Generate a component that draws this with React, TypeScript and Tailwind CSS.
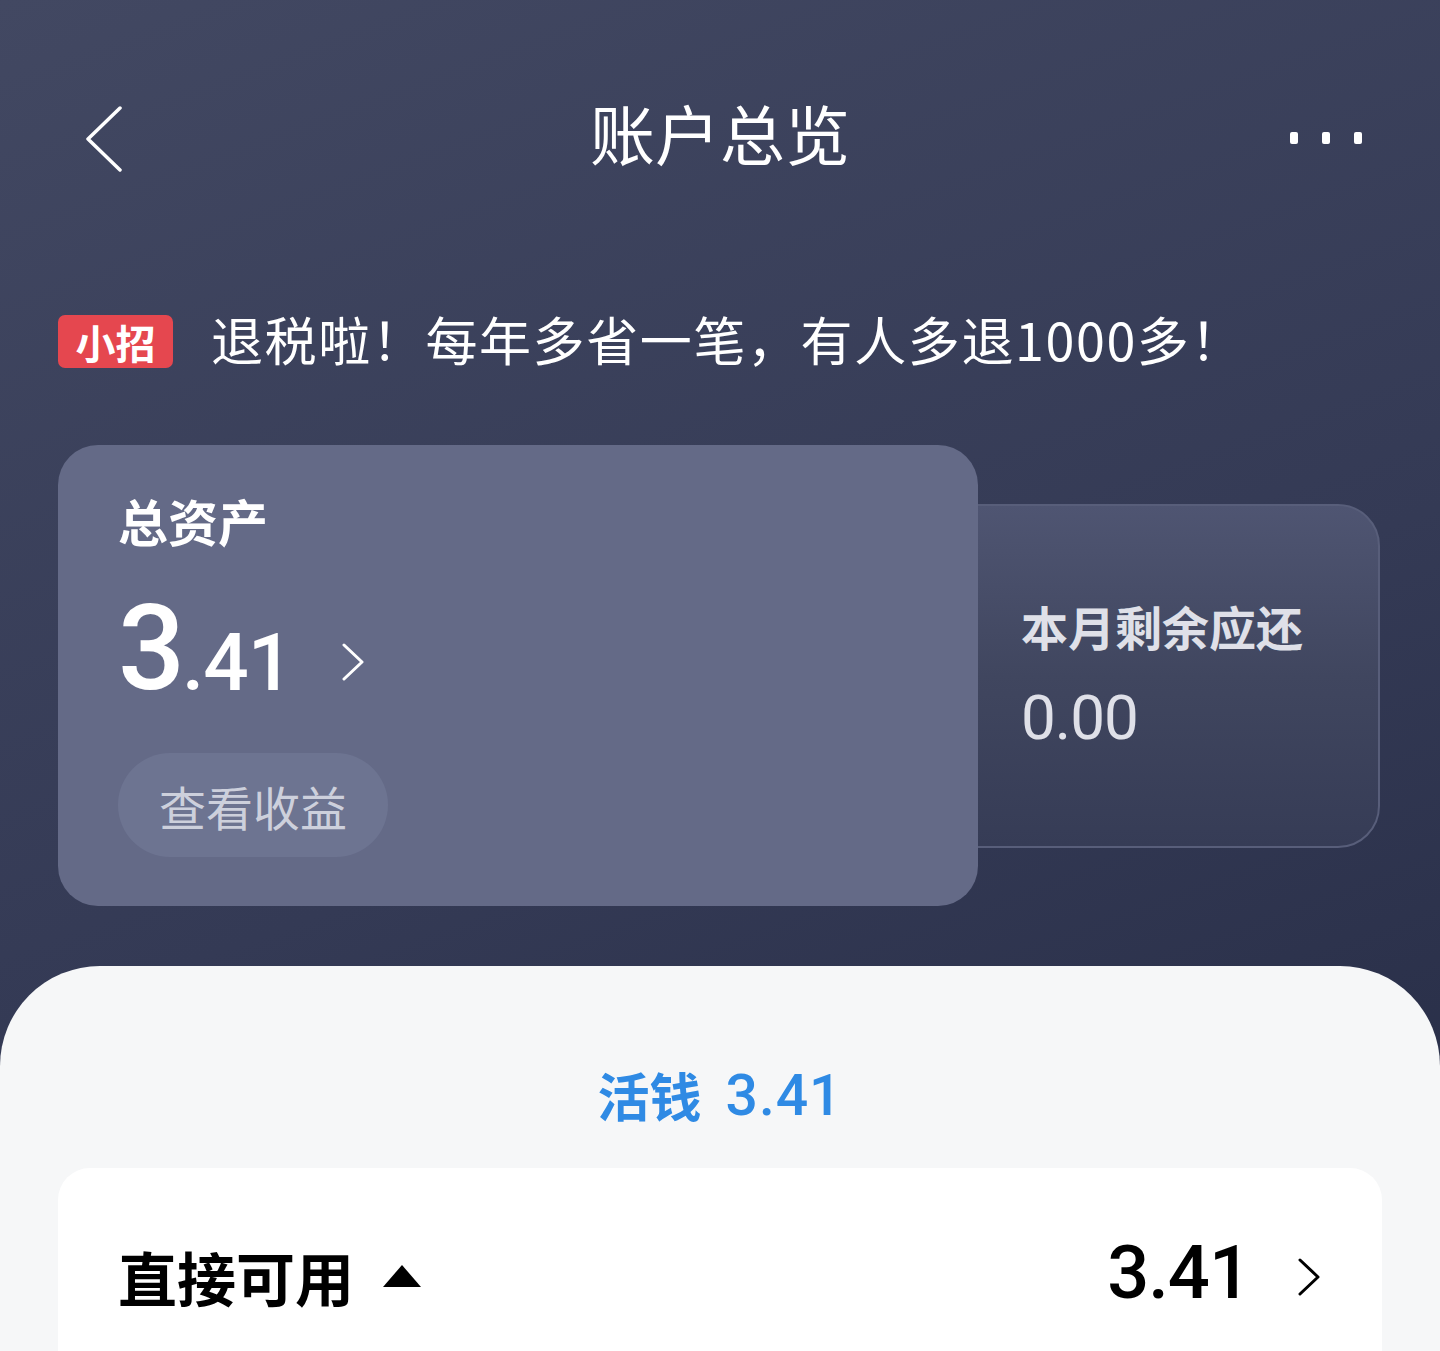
import React from "react";

const cjk = { fontFamily: '"Noto Sans CJK SC", "Noto Sans", sans-serif' };
const num = { fontFamily: 'Roboto, "Noto Sans", sans-serif' };

function Chevron({ className, color = "white", w = 20, h = 36, sw = 3 }: { className?: string; color?: string; w?: number; h?: number; sw?: number }) {
  return (
    <svg className={className} width={w} height={h} viewBox={`0 0 ${w} ${h}`} fill="none">
      <path d={`M2 2 L${w - 2} ${h / 2} L2 ${h - 2}`} stroke={color} strokeWidth={sw} strokeLinecap="round" strokeLinejoin="round" />
    </svg>
  );
}

export default function App() {
  return (
    <div
      className="relative w-[1440px] h-[1351px] overflow-hidden bg-[linear-gradient(160deg,#424862_0%,#343a55_55%,#252b44_100%)]"
      style={cjk}
    >
      {/* Header */}
      <div className="pt-[108px] px-[86px] h-[172px] flex items-center justify-between relative">
        <svg width="36" height="66" viewBox="0 0 36 66" fill="none" className="-mt-[3px]">
          <path d="M34 2 L2 33 L34 64" stroke="white" strokeWidth="3.5" strokeLinecap="round" strokeLinejoin="round" />
        </svg>
        <div className="absolute left-0 right-0 top-[100px] h-[64px] flex items-center justify-center pointer-events-none">
          <span className="text-white text-[65px] leading-none font-normal">账户总览</span>
        </div>
        <div className="flex gap-[24px] items-center mr-[-8px] -mt-[4px]">
          <span className="block w-[8px] h-[12px] rounded-[2px] bg-white" />
          <span className="block w-[8px] h-[12px] rounded-[2px] bg-white" />
          <span className="block w-[8px] h-[12px] rounded-[2px] bg-white" />
        </div>
      </div>

      {/* Banner */}
      <div className="mt-[143px] ml-[58px] flex items-center h-[53px]">
        <div className="h-[53px] w-[115px] rounded-[7px] bg-[#e5474f] flex items-center justify-center">
          <span className="text-white text-[40px] font-bold leading-none">小招</span>
        </div>
        <span className="ml-[38px] -mt-[6px] text-white text-[52px] leading-none tracking-[1.6px]">退税啦！每年多省一笔，有人多退1000多！</span>
      </div>

      {/* Cards */}
      <div className="mt-[77px] ml-[58px] flex items-center">
        <div className="relative z-10 w-[920px] h-[461px] rounded-[40px] bg-[#646a87] pl-[60px] pt-[50px]">
          <div className="text-white text-[50px] font-bold leading-none">总资产</div>
          <div className="mt-[58px] flex items-end text-white h-[92px]" style={num}>
            <span className="text-[118px] leading-[92px] font-medium tracking-[-3px]">3</span>
            <span className="text-[80px] leading-[64px] font-medium tracking-[-1px]">.41</span>
            <Chevron className="ml-[50px] mb-[14px]" w={22} h={38} sw={3} />
          </div>
          <div className="mt-[58px] w-[270px] h-[104px] rounded-full bg-[#6d7491] flex items-center justify-center">
            <span className="text-[47px] leading-none text-[#cdd0dc]">查看收益</span>
          </div>
        </div>
        <div className="relative -ml-[44px] w-[446px] h-[344px] rounded-[42px] border-2 border-[#585e7a] bg-[linear-gradient(180deg,#4f5572_0%,#40465f_50%,#363c56_100%)] pl-[85px] pt-[96px]">
          <div className="text-[#dfe0e8] text-[47px] font-bold leading-none">本月剩余应还</div>
          <div className="mt-[38px] text-[#dfe0e8] text-[62px] leading-none tracking-[-1px]" style={num}>0.00</div>
        </div>
      </div>

      {/* Bottom sheet */}
      <div className="mt-[60px] bg-[#f6f7f8] rounded-t-[100px] h-[420px] pt-[100px]">
        <div className="flex items-center justify-center gap-[24px] h-[58px] text-[#2f8ae4]">
          <span className="text-[52px] font-bold leading-none">活钱</span>
          <span className="text-[57px] leading-none font-medium tracking-[1px]" style={num}>3.41</span>
        </div>
        <div className="mx-[58px] mt-[44px] bg-white rounded-[32px] h-[300px] pt-[76px] pl-[60px] pr-[62px]">
          <div className="flex items-center justify-between h-[64px]">
            <div className="flex items-center">
              <span className="text-black text-[59px] font-bold leading-none">直接可用</span>
              <svg className="ml-[28px]" width="40" height="24" viewBox="0 0 40 24">
                <path d="M20 1 L39 23 L1 23 Z" fill="black" />
              </svg>
            </div>
            <div className="flex items-center">
              <span className="text-black text-[74px] leading-none font-medium tracking-[-1px] -mt-[6px]" style={num}>3.41</span>
              <Chevron className="ml-[48px] mt-[2px]" color="black" w={22} h={38} sw={3} />
            </div>
          </div>
        </div>
      </div>
    </div>
  );
}
